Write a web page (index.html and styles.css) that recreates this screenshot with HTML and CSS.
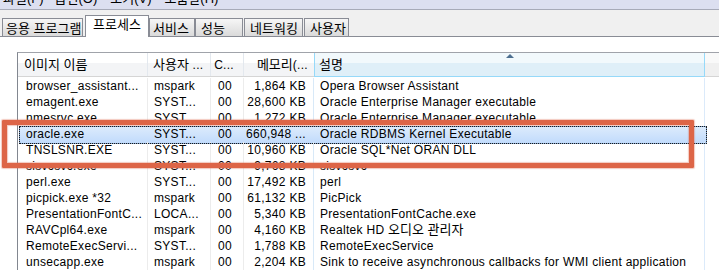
FILE: index.html
```html
<!DOCTYPE html>
<html lang="ko">
<head>
<meta charset="utf-8">
<title>Windows 작업 관리자</title>
<link rel="stylesheet" href="styles.css">
</head>
<body>
<div class="menubar">
  <span class="menu m1">파일(F)</span>
  <span class="menu m2">옵션(O)</span>
  <span class="menu m3">보기(V)</span>
  <span class="menu m4">도움말(H)</span>
</div>
<div class="tabstrip">
  <div class="tab t1">응용 프로그램</div>
  <div class="tab t2 active">프로세스</div>
  <div class="tab t3">서비스</div>
  <div class="tab t4">성능</div>
  <div class="tab t5">네트워킹</div>
  <div class="tab t6">사용자</div>
</div>
<div class="page">
  <div class="listview">
    <div class="header">
      <div class="hc c1"><span class="ko">이미지 이름</span></div>
      <div class="hc c2"><span class="ko">사용자</span> ...</div>
      <div class="hc c3 num">C...</div>
      <div class="hc c4 num"><span class="ko">메모리</span>(...</div>
      <div class="hc c5 sorted"><span class="arrow"></span><span class="ko">설명</span></div>
      <div class="hc c6"></div>
    </div>
    <div class="rows">
      <div class="row"><div class="c c1">browser_assistant...</div><div class="c c2">mspark</div><div class="c c3 num">00</div><div class="c c4 num">1,864 KB</div><div class="c c5">Opera Browser Assistant</div><div class="c c6"></div></div>
      <div class="row"><div class="c c1">emagent.exe</div><div class="c c2">SYST...</div><div class="c c3 num">00</div><div class="c c4 num">28,600 KB</div><div class="c c5">Oracle Enterprise Manager executable</div><div class="c c6"></div></div>
      <div class="row"><div class="c c1">nmesrvc.exe</div><div class="c c2">SYST...</div><div class="c c3 num">00</div><div class="c c4 num">1,272 KB</div><div class="c c5">Oracle Enterprise Manager executable</div><div class="c c6"></div></div>
      <div class="row selected"><div class="c c1">oracle.exe</div><div class="c c2">SYST...</div><div class="c c3 num">00</div><div class="c c4 num">660,948 ...</div><div class="c c5">Oracle RDBMS Kernel Executable</div><div class="c c6"></div></div>
      <div class="row"><div class="c c1">TNSLSNR.EXE</div><div class="c c2">SYST...</div><div class="c c3 num">00</div><div class="c c4 num">10,960 KB</div><div class="c c5">Oracle SQL*Net ORAN DLL</div><div class="c c6"></div></div>
      <div class="row"><div class="c c1">sisvcsvc.exe</div><div class="c c2">SYST...</div><div class="c c3 num">00</div><div class="c c4 num">9,768 KB</div><div class="c c5">sisvcsvc</div><div class="c c6"></div></div>
      <div class="row"><div class="c c1">perl.exe</div><div class="c c2">SYST...</div><div class="c c3 num">00</div><div class="c c4 num">17,492 KB</div><div class="c c5">perl</div><div class="c c6"></div></div>
      <div class="row"><div class="c c1">picpick.exe *32</div><div class="c c2">mspark</div><div class="c c3 num">00</div><div class="c c4 num">61,132 KB</div><div class="c c5">PicPick</div><div class="c c6"></div></div>
      <div class="row"><div class="c c1">PresentationFontC...</div><div class="c c2">LOCA...</div><div class="c c3 num">00</div><div class="c c4 num">5,340 KB</div><div class="c c5">PresentationFontCache.exe</div><div class="c c6"></div></div>
      <div class="row"><div class="c c1">RAVCpl64.exe</div><div class="c c2">mspark</div><div class="c c3 num">00</div><div class="c c4 num">4,160 KB</div><div class="c c5">Realtek HD <span class="ko">오디오 관리자</span></div><div class="c c6"></div></div>
      <div class="row"><div class="c c1">RemoteExecServi...</div><div class="c c2">SYST...</div><div class="c c3 num">00</div><div class="c c4 num">1,788 KB</div><div class="c c5">RemoteExecService</div><div class="c c6"></div></div>
      <div class="row"><div class="c c1">unsecapp.exe</div><div class="c c2">mspark</div><div class="c c3 num">00</div><div class="c c4 num">2,204 KB</div><div class="c c5">Sink to receive asynchronous callbacks for WMI client application</div><div class="c c6"></div></div>
    </div>
  </div>
</div>
<div class="annotation"></div>
</body>
</html>
```

FILE: styles.css
```css
* { box-sizing: border-box; }
html, body {
  margin: 0;
  padding: 0;
}
body {
  width: 719px;
  height: 270px;
  overflow: hidden;
  position: relative;
  background: #ffffff;
  color: #000;
  font-family: "Liberation Sans", "Noto Sans CJK KR", sans-serif;
  font-size: 12px;
  letter-spacing: 0.3px;
}
.ko {
  font-size: 13px;
  letter-spacing: 0;
}

/* menu bar (cut off at the top) */
.menubar {
  height: 10px;
  background: #dcdff0;
  border-bottom: 1px solid #a7aab8;
  overflow: hidden;
  display: flex;
  align-items: flex-start;
  padding-left: 3px;
}
.menu {
  font-size: 13px;
  line-height: 14px;
  margin-top: -8px;
  white-space: nowrap;
  letter-spacing: 0;
}
.m2 { margin-left: 11px; }
.m3 { margin-left: 13px; }
.m4 { margin-left: 13px; }

/* tabs */
.tabstrip {
  height: 27px;
  background: #f0f0f0;
  border-bottom: 1px solid #898c95;
  display: flex;
  align-items: flex-end;
  padding-left: 2px;
  position: relative;
}
.tab {
  height: 18px;
  border: 1px solid #898c95;
  border-bottom: none;
  background: linear-gradient(#f6f6f6, #e8e8e8 50%, #dadada);
  font-size: 13px;
  line-height: 17px;
  padding-top: 1px;
  padding-left: 5px;
  text-align: left;
  white-space: nowrap;
  letter-spacing: 0;
  overflow: hidden;
}
.t1 { width: 81px; padding-left: 3px; }
.t2 { width: 64px; margin-left: 2px; }
.t3 { width: 46px; padding-left: 3px; }
.t4 { width: 48px; }
.t5 { width: 59px; margin-left: 1px; }
.t6 { width: 45px; margin-left: 1px; }
.tab.active {
  height: 22px;
  margin-bottom: -1px;
  background: #ffffff;
  line-height: 18px;
  padding-top: 0;
  padding-left: 0;
  text-align: center;
  position: relative;
  z-index: 1;
}

/* page */
.page {
  padding-top: 15px;
}
.listview {
  margin-left: 17px;
  border-left: 1px solid #828790;
  border-top: 1px solid #a0a3aa;
}
.header {
  display: grid;
  grid-template-columns: 130px 63px 33px 70px 391px 1fr;
  height: 24px;
  background: linear-gradient(#ffffff 0, #ffffff 10px, #f3f4f6 10px, #f3f4f6 100%);
  border-bottom: 1px solid #d5d5d5;
}
.hc {
  border-right: 1px solid #e3e8ee;
  line-height: 24px;
  padding-left: 6px;
  white-space: nowrap;
  overflow: hidden;
  position: relative;
}
.hc.c2 { padding-left: 5px; }
.hc.c3 { padding-right: 9px; padding-left: 0; }
.hc.c4 { padding-right: 6px; padding-left: 0; border-right: none; }
.hc.num { text-align: right; }
.hc.sorted {
  background: linear-gradient(#f2f9fc 0, #f2f9fc 10px, #dfeff8 10px, #dfeff8 100%);
  border-left: 1px solid #96d9f9;
  border-right: 1px solid #96d9f9;
  margin-bottom: -1px;
  border-bottom: 1px solid #96d9f9;
  padding-left: 4px;
}
.hc.c6 {
  border-right: none;
  background: linear-gradient(#f9f9f9 0, #f9f9f9 10px, #f0f0f0 10px, #f0f0f0 100%);
}
.arrow {
  position: absolute;
  left: 50%;
  top: 1px;
  margin-left: -4px;
  width: 0;
  height: 0;
  border-left: 4px solid transparent;
  border-right: 4px solid transparent;
  border-bottom: 4px solid #4d6f90;
}

/* rows */
.rows {
  padding-top: 1px;
}
.row {
  display: grid;
  grid-template-columns: 130px 63px 33px 70px 391px 1fr;
  height: 16px;
  position: relative;
}
.c {
  line-height: 16px;
  white-space: nowrap;
  overflow: hidden;
  border-right: 1px solid #ececec;
  position: relative;
  z-index: 1;
}
.c.c1 { padding-left: 8px; }
.c.c2 { padding-left: 6px; }
.c.c3 { padding-right: 11px; text-align: right; }
.c.c4 { padding-right: 7px; text-align: right; border-right-color: #d8e9f8; }
.c.c5 { padding-left: 6px; border-right-color: #dbeafa; overflow: visible; }
.c.c6 { border-right: none; }

.row.selected::before {
  content: "";
  position: absolute;
  left: 1px;
  top: 0;
  width: 686px;
  height: 16px;
  border: 1px solid #7da2ce;
  border-radius: 2px;
  background: linear-gradient(#dcebfc, #c1dbfc);
  z-index: 0;
}
.row.selected::after {
  content: "";
  position: absolute;
  left: 1px;
  top: 0;
  width: 686px;
  height: 16px;
  border: 1px dotted #1a1a1a;
  z-index: 2;
}
.row.selected .c { border-right-color: transparent; }

/* red annotation box */
.annotation {
  position: absolute;
  left: 2px;
  top: 120px;
  width: 692px;
  height: 48px;
  border: 5px solid #dd6547;
  border-radius: 1px;
  box-shadow: 0 0 1px 1px rgba(221, 101, 71, 0.35), inset 0 0 1px 1px rgba(221, 101, 71, 0.35);
  z-index: 5;
}
```
